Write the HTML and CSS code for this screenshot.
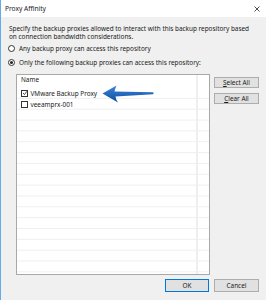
FILE: index.html
```html
<!DOCTYPE html>
<html>
<head>
    <title>Proxy Affinity</title>
    <link rel="stylesheet" href="styles.css">
</head>

<body>
    <div class="titlebar">
        <span class="title">Proxy Affinity</span>
        <svg class="close" width="6" height="6" viewBox="0 0 6 6">
            <path d="M0.5 0.5 L5.5 5.5 M5.5 0.5 L0.5 5.5" stroke="#222" stroke-width="0.8" fill="none"/>
        </svg>
    </div>

    <div class="content">
        <p class="intro">Specify the backup proxies allowed to interact with this backup repository based<br>on connection bandwidth considerations.</p>

        <div class="options">
            <label class="option"><span class="radio"></span>Any backup proxy can access this repository</label>
            <label class="option"><span class="radio checked"></span>Only the following backup proxies can access this repository:</label>
        </div>

        <div class="main">
            <div class="list">
                <div class="list-header">Name</div>
                <div class="rows">
                    <div class="row">
                        <span class="checkbox">
                            <svg width="6" height="6" viewBox="0 0 6 6"><path d="M1 3 L2.5 4.5 L5 1.2" stroke="#222" stroke-width="0.8" fill="none"/></svg>
                        </span>VMware Backup Proxy
                    </div>
                    <div class="row"><span class="checkbox"></span>veeamprx-001</div>
                </div>
            </div>
            <div class="side">
                <button class="btn"><u>S</u>elect All</button>
                <button class="btn"><u>C</u>lear All</button>
            </div>
        </div>

        <div class="footer">
            <button class="btn btn-default">OK</button>
            <button class="btn">Cancel</button>
        </div>
    </div>

    <!-- annotation arrow drawn over the list -->
    <svg class="arrow" width="54" height="20" viewBox="0 0 54 20">
        <defs>
            <linearGradient id="arrowFill" x1="0" y1="0" x2="0" y2="1">
                <stop offset="0" stop-color="#3f86da"/>
                <stop offset="1" stop-color="#0c4a9e"/>
            </linearGradient>
        </defs>
        <path d="M1.5 9.5 L15.5 1.5 Q14 5 13.5 7.5 L52 8.3 Q53.5 9.3 52 10.3 L14.5 12.5 Q15 16 17 18.5 Z" fill="url(#arrowFill)"/>
    </svg>
</body>
</html>
```

FILE: styles.css
```css
html, body {
    margin: 0;
    padding: 0;
}

body {
    width: 266px;
    height: 300px;
    box-sizing: border-box;
    border-left: 1px solid #63acec;
    background-color: #f0f0f0;
    font-family: "Noto Sans", "Open Sans", sans-serif;
    font-size: 6.4px;
    color: #1a1a1a;
    overflow: hidden;
    position: relative;
}

.titlebar {
    height: 17px;
    background-color: #fff;
    display: flex;
    align-items: center;
    justify-content: space-between;
    padding: 0 6px 0 4px;
}

.title {
    font-size: 6.6px;
}

.content {
    padding: 8px 0 0 8px;
}

.intro {
    margin: 0;
    line-height: 8px;
}

.options {
    margin-top: 3px;
    display: flex;
    flex-direction: column;
    gap: 4.5px;
}

.option {
    height: 9px;
    display: flex;
    align-items: center;
}

.radio {
    width: 5px;
    height: 5px;
    border: 1px solid #333;
    border-radius: 50%;
    background-color: #fff;
    margin-left: -1px;
    margin-right: 4px;
    display: flex;
    align-items: center;
    justify-content: center;
}

.radio.checked::after {
    content: "";
    width: 3px;
    height: 3px;
    border-radius: 50%;
    background-color: #222;
}

.main {
    margin-top: 7.5px;
    margin-left: 7px;
    display: flex;
    gap: 4px;
}

.list {
    width: 194px;
    height: 201px;
    box-sizing: border-box;
    border: 1px solid #a8a8a8;
    background-color: #fff;
    background-image: linear-gradient(to right, transparent 179px, #efefef 179px, #efefef 181px, transparent 181px);
}

.list-header {
    height: 13px;
    line-height: 10px;
    padding-left: 4px;
}

.rows {
    height: 186px;
    background-image: linear-gradient(to top, #efefef 1px, transparent 1px);
    background-size: 100% 10.85px;
}

.row {
    height: 10.85px;
    display: flex;
    align-items: center;
    padding-left: 4px;
}

.checkbox {
    width: 5px;
    height: 5px;
    border: 1px solid #333;
    background-color: #fff;
    margin-right: 2.5px;
    display: flex;
}

.checkbox svg {
    margin: -0.5px;
}

.side {
    width: 45px;
    padding-top: 2.5px;
    display: flex;
    flex-direction: column;
    gap: 5px;
}

.btn {
    height: 11px;
    padding: 0;
    border: 1px solid #adadad;
    background-color: #e1e1e1;
    font-family: inherit;
    font-size: 6.4px;
    color: #1a1a1a;
    line-height: 9px;
}

.footer {
    margin-top: 4px;
    padding-right: 7px;
    display: flex;
    justify-content: flex-end;
    gap: 5px;
}

.footer .btn {
    width: 45px;
    height: 13px;
}

.footer .btn-default {
    width: 44px;
    border-color: #0078d7;
}

.arrow {
    position: absolute;
    left: 100px;
    top: 84px;
}
```
